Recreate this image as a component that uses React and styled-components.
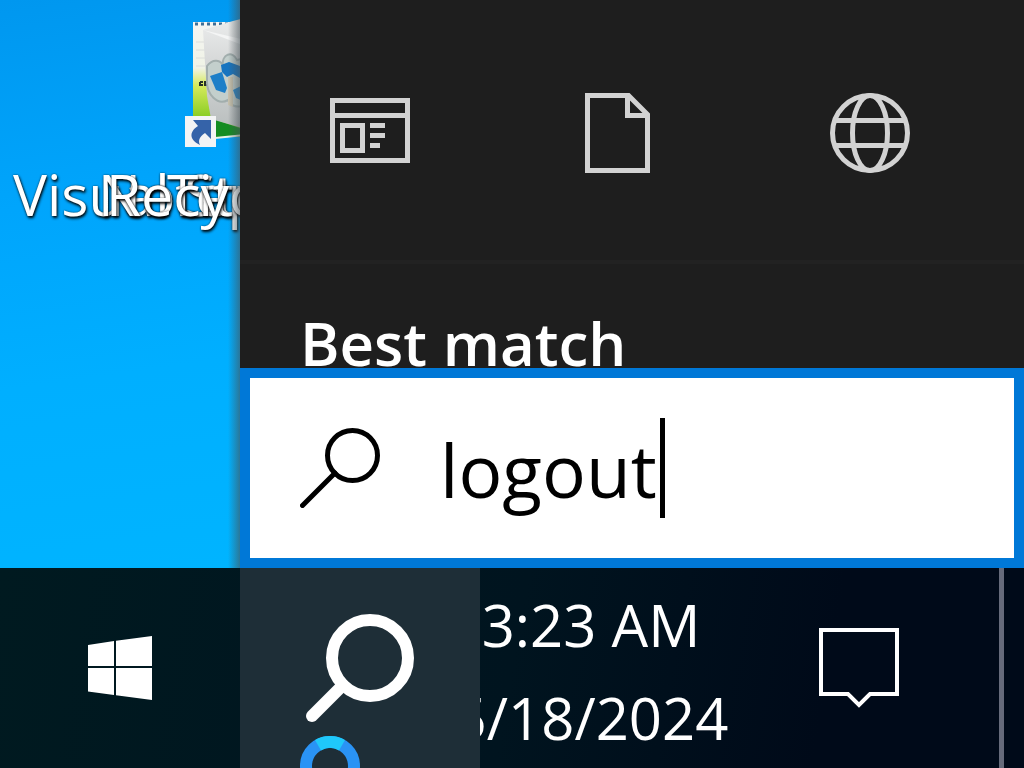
import React, { useState } from "react";
import styled, { createGlobalStyle } from "styled-components";

const colors = {
  panel: "#1e1e1e",
  divider: "#222222",
  accent: "#0078d7",
  icon: "#d2d2d2",
  active: "#1e2e37",
  white: "#ffffff",
};

const filters = [
  { label: "Apps", Icon: AppsIcon },
  { label: "Documents", Icon: DocumentIcon },
  { label: "Web", Icon: GlobeIcon },
];

const shortcuts = [
  { name: "Visual Studio", left: 13 },
  { name: "Notepad++", left: 98 },
  { name: "Titus", left: 167 },
  { name: "Recycle Bin", left: 106 },
];

export default function App() {
  const [query, setQuery] = useState("logout");

  return (
    <>
      <GlobalStyle />
      <Screen>
        <Workspace>
          <Desktop>
            <ShortcutStack href="#recycle-bin">
              <DesktopIcon />
              {shortcuts.map(({ name, left }) => (
                <ShortcutLabel key={name} $left={left}>
                  {name}
                </ShortcutLabel>
              ))}
            </ShortcutStack>
          </Desktop>
          <SearchPanel>
            <Filters>
              {filters.map(({ label, Icon }) => (
                <FilterButton key={label} type="button" aria-label={label}>
                  <Icon />
                </FilterButton>
              ))}
            </Filters>
            <Results>
              <ResultsTitle>Best match</ResultsTitle>
            </Results>
            <SearchBox>
              <SearchIcon />
              <QueryField>
                <QueryInput
                  type="text"
                  aria-label="Search"
                  value={query}
                  onChange={(e) => setQuery(e.target.value)}
                />
                <Caret />
              </QueryField>
            </SearchBox>
          </SearchPanel>
        </Workspace>
        <Taskbar>
          <TaskButton type="button" aria-label="Start">
            <WindowsLogo />
          </TaskButton>
          <TaskButton type="button" aria-label="Search" $active>
            <TaskSearchIcon />
            <BusyRing />
          </TaskButton>
          <Clock>
            <span>3:23 AM</span>
            <span>5/18/2024</span>
          </Clock>
          <ActionButton type="button" aria-label="Notifications">
            <MessageIcon />
          </ActionButton>
          <ShowDesktop type="button" aria-label="Show desktop" />
        </Taskbar>
      </Screen>
    </>
  );
}

function AppsIcon() {
  return (
    <svg width="80" height="80" viewBox="0 0 80 80" fill="none">
      <g stroke={colors.icon} strokeWidth="5">
        <rect x="2.5" y="7.5" width="75" height="60" />
        <path d="M0 22.5H80" />
        <rect x="12.5" y="32.5" width="20" height="25" />
        <path d="M40 32.5H55M40 42.5H55M40 52.5H50" />
      </g>
    </svg>
  );
}

function DocumentIcon() {
  return (
    <svg width="80" height="80" viewBox="0 0 80 80" fill="none">
      <path
        d="M7.5 2.5H48.5L67.5 21.5V77.5H7.5ZM47.5 2.5V22.5H67.5"
        stroke={colors.icon}
        strokeWidth="5"
      />
    </svg>
  );
}

function GlobeIcon() {
  return (
    <svg width="80" height="80" viewBox="0 0 80 80" fill="none">
      <g stroke={colors.icon} strokeWidth="5">
        <circle cx="40" cy="40" r="37.5" />
        <ellipse cx="40" cy="40" rx="17.5" ry="37.5" />
        <path d="M5 27.5H75M5 52.5H75" />
      </g>
    </svg>
  );
}

function SearchIcon() {
  return (
    <svg width="80" height="80" viewBox="0 0 80 80" fill="none">
      <g stroke="#000" strokeWidth="5">
        <circle cx="52.5" cy="27.5" r="25" />
        <path d="M2.5 77.5L35 45" strokeLinecap="round" />
      </g>
    </svg>
  );
}

function TaskSearchIcon() {
  return (
    <svg width="108" height="108" viewBox="0 0 108 108" fill="none">
      <g stroke="#fff" strokeWidth="12">
        <circle cx="64" cy="44" r="38" />
        <path d="M6 102L37 71" strokeLinecap="round" />
      </g>
    </svg>
  );
}

function WindowsLogo() {
  return (
    <svg width="64" height="64" viewBox="0 0 64 64" fill="#fff">
      <path d="M0 9L26 5V30H0ZM28 4.7L64 0V30H28ZM0 32H26V59L0 55.5ZM28 32H64V64L28 59.3Z" />
    </svg>
  );
}

function BusyRing() {
  return (
    <Ring width="60" height="60" viewBox="0 0 60 60" fill="none">
      <circle cx="30" cy="30" r="24" stroke="#2a93f5" strokeWidth="12" />
      <path d="M18 9.2A24 24 0 0 1 42 9.2" stroke="#1fc8fa" strokeWidth="12" />
    </Ring>
  );
}

function MessageIcon() {
  return (
    <svg width="80" height="80" viewBox="0 0 80 80" fill="none">
      <path
        d="M2 2H78V66H51L40 77L29 66H2Z"
        stroke="#fff"
        strokeWidth="4"
      />
    </svg>
  );
}

function DesktopIcon() {
  return (
    <svg width="60" height="132" viewBox="0 0 60 132">
      <defs>
        <linearGradient id="photo" x1="0" y1="0" x2="0" y2="1">
          <stop offset="0" stopColor="#f4f5f3" />
          <stop offset="0.4" stopColor="#f0f3e6" />
          <stop offset="0.55" stopColor="#d6ea5c" />
          <stop offset="0.85" stopColor="#83cb1e" />
          <stop offset="1" stopColor="#168c20" />
        </linearGradient>
        <linearGradient id="bin" x1="0" y1="0" x2="0" y2="1">
          <stop offset="0" stopColor="#eceded" />
          <stop offset="0.4" stopColor="#d6d8d8" />
          <stop offset="1" stopColor="#b9bebe" />
        </linearGradient>
      </defs>
      <path d="M8 6H60V121L8 118Z" fill="url(#photo)" />
      <path d="M10 8H50" stroke="#3f6f96" strokeWidth="3" strokeDasharray="3 3" />
      <path d="M11 26H20M11 34H20M11 42H20M11 50H20" stroke="#dcdedb" strokeWidth="1" />
      <path d="M26 102L60 114V121H26Z" fill="#148c22" />
      <path d="M30 122L60 119" stroke="#e8f2e5" strokeWidth="2" />
      <path d="M18 14L48 5L60 2V113L26 103L22 80Z" fill="url(#bin)" />
      <path d="M18 14L60 24V30Z" fill="#f4f5f5" />
      <path
        d="M15 66H18M15 66V69H18M20 66H23V69H20ZM25 64V69"
        stroke="#26302a"
        strokeWidth="2"
        fill="none"
      />
      <path
        d="M22 50C28 42 36 44 38 50C36 38 48 34 52 44L60 42V88C52 94 44 88 43 84C32 90 22 78 22 66Z"
        fill="#c3cfcc"
        stroke="#a2aead"
        strokeWidth="2"
      />
      <path d="M25 60L37 56L42 72L40 77L31 74Z" fill="#1d7fc8" />
      <path d="M36 49L44 46L55 50V62L48 58L42 61L37 56Z" fill="#1674c0" />
      <path d="M48 74L60 68V86L51 82Z" fill="#2a88cb" />
      <path d="M43 61H48V91L43 89Z" fill="#c8c2ae" />
      <rect y="100" width="31" height="31" fill="#f3f4f5" />
      <path
        d="M8 104H26V123L20 117C14 121 13 125 15 129C3 123 5 115 13 110Z"
        fill="#3563a9"
      />
    </svg>
  );
}

const GlobalStyle = createGlobalStyle`
  *, *::before, *::after {
    box-sizing: border-box;
  }

  body {
    margin: 0;
    overflow: hidden;
    font-family: "Open Sans", "Noto Sans", sans-serif;
  }

  button {
    border: 0;
    padding: 0;
    background: none;
  }

  svg {
    display: block;
    flex-shrink: 0;
  }
`;

const Screen = styled.div`
  display: flex;
  flex-direction: column;
  height: 100vh;
`;

const Workspace = styled.main`
  display: flex;
  flex: 1;
  min-height: 0;
`;

const Desktop = styled.section`
  position: relative;
  flex: 0 0 240px;
  overflow: hidden;
  background: linear-gradient(
    172deg,
    #0097ef 0%,
    #00a5fc 35%,
    #00afff 65%,
    #00b4ff 100%
  );

  /* shade cast by the search panel */
  &::after {
    content: "";
    position: absolute;
    inset: 0 0 0 auto;
    width: 12px;
    background: linear-gradient(to right, transparent, rgba(70, 80, 85, 0.6));
  }
`;

const ShortcutStack = styled.a`
  position: relative;
  display: block;
  height: 250px;
  padding: 16px 0 0 185px;
  color: ${colors.white};
  text-decoration: none;
`;

const ShortcutLabel = styled.span`
  position: absolute;
  top: 155px;
  left: ${(props) => props.$left}px;
  font-size: 57px;
  line-height: 78px;
  white-space: nowrap;
  text-shadow: 1px 2px 3px #000, 0 0 2px rgba(0, 0, 0, 0.6);
`;

const SearchPanel = styled.section`
  display: flex;
  flex: 1;
  flex-direction: column;
  min-width: 0;
  background: ${colors.panel};
`;

const Filters = styled.div`
  display: grid;
  flex: 0 0 264px;
  grid-template-columns: repeat(3, 1fr);
  padding: 0 29px 0 5px;
  border-bottom: 4px solid ${colors.divider};
`;

const FilterButton = styled.button`
  display: flex;
  align-items: center;
  justify-content: center;
  padding-top: 6px;
`;

const Results = styled.div`
  flex: 1;
  min-height: 0;
  overflow: hidden;
  padding: 38px 60px 0;
`;

const ResultsTitle = styled.h2`
  margin: 0;
  color: ${colors.white};
  font-size: 60px;
  font-weight: 600;
  line-height: 82px;
`;

const SearchBox = styled.div`
  display: flex;
  align-items: center;
  flex: 0 0 200px;
  padding: 0 50px;
  gap: 60px;
  border: 10px solid ${colors.accent};
  background: ${colors.white};
`;

const QueryField = styled.div`
  display: flex;
  align-items: center;
`;

const QueryInput = styled.input`
  width: 220px;
  field-sizing: content;
  padding: 4px 0 0;
  border: 0;
  outline: 0;
  background: none;
  color: #000;
  font-family: inherit;
  font-size: 73px;
  line-height: 100px;
`;

const Caret = styled.span`
  width: 5px;
  height: 100px;
  background: #000;
`;

const Taskbar = styled.footer`
  display: flex;
  flex: 0 0 200px;
  background: linear-gradient(100deg, #001a20 0%, #00141f 50%, #000a19 80%);
`;

const TaskButton = styled.button`
  position: relative;
  display: flex;
  align-items: center;
  justify-content: center;
  flex: 0 0 240px;
  overflow: hidden;
  background: ${(props) => (props.$active ? colors.active : "none")};
`;

const Ring = styled.svg`
  position: absolute;
  top: 168px;
  left: 60px;
`;

const Clock = styled.div`
  display: flex;
  flex: 0 0 250px;
  flex-direction: column;
  align-items: center;
  justify-content: center;
  overflow: hidden;
  padding: 6px 28px 0 0;
  color: ${colors.white};
  font-size: 58px;
  line-height: 93px;
  white-space: nowrap;
`;

const ActionButton = styled.button`
  display: flex;
  align-items: center;
  justify-content: center;
  flex: 1;
  padding-right: 12px;
`;

const ShowDesktop = styled.button`
  flex: 0 0 25px;
  border-left: 5px solid #666b7b;
`;
